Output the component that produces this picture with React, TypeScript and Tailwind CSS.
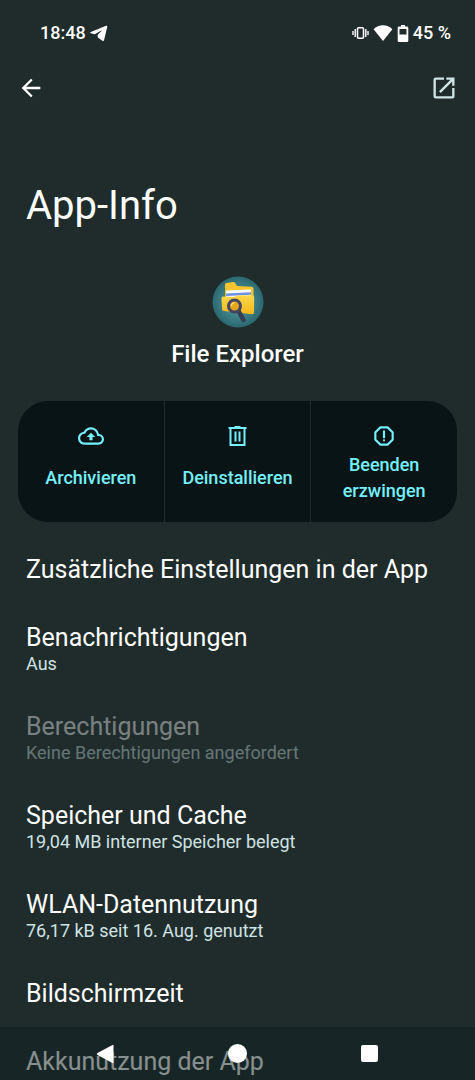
import type { ReactNode } from "react";
import {
  MdArrowBack,
  MdOpenInNew,
  MdOutlineBackup,
  MdOutlineReport,
} from "react-icons/md";

/* ===================== TYPES ===================== */
type Setting = {
  title: string;
  summary?: string;
  disabled?: boolean;
};

/* ===================== DATA ===================== */
const settings: Setting[] = [
  { title: "Zusätzliche Einstellungen in der App" },
  { title: "Benachrichtigungen", summary: "Aus" },
  {
    title: "Berechtigungen",
    summary: "Keine Berechtigungen angefordert",
    disabled: true,
  },
  {
    title: "Speicher und Cache",
    summary: "19,04 MB interner Speicher belegt",
  },
  {
    title: "WLAN-Datennutzung",
    summary: "76,17 kB seit 16. Aug. genutzt",
  },
  { title: "Bildschirmzeit" },
  {
    title: "Akkunutzung der App",
    summary: "0 % Nutzung seit dem letzten vollständigen Aufladen",
  },
];

/* ===================== PAGE ===================== */
export default function App() {
  return (
    <div className="flex h-screen flex-col bg-[#202b2c] font-[Roboto,sans-serif] text-white">
      <StatusBar />

      <header className="flex items-center justify-between px-[17px]">
        <button aria-label="Zurück">
          <MdArrowBack className="size-7" />
        </button>
        <button aria-label="In App öffnen" className="text-[#cfe5e6]">
          <MdOpenInNew className="size-7" />
        </button>
      </header>

      <main className="flex-1 overflow-y-auto pb-16 [scrollbar-width:none]">
        <h1 className="px-[26px] pt-[78px] text-[40px] leading-[52px]">App-Info</h1>

        <div className="flex flex-col items-center pt-11">
          <AppIcon />
          <h2 className="pt-2.5 text-2xl font-medium">File Explorer</h2>
        </div>

        <div className="mx-[18px] mt-[31px] grid min-h-[121px] grid-cols-3 gap-px overflow-hidden rounded-[30px]">
          <ActionButton label="Archivieren" icon={<MdOutlineBackup className="size-[26px]" />} />
          <ActionButton label="Deinstallieren" icon={<TrashIcon />} />
          <ActionButton
            label="Beenden erzwingen"
            icon={<MdOutlineReport className="size-[26px]" />}
          />
        </div>

        <ul className="pt-3.5">
          {settings.map((s) => (
            <SettingItem key={s.title} {...s} />
          ))}
        </ul>
      </main>

      <NavigationBar />
    </div>
  );
}

/* ================= STATUS BAR ================= */
function StatusBar() {
  return (
    <div className="flex items-center justify-between pt-[21px] pr-6 pb-[29px] pl-10 text-lg leading-6 font-medium">
      <div className="flex items-center gap-1">
        <span>18:48</span>
        <svg viewBox="0 0 18 18" className="size-[18px]" fill="currentColor">
          <path d="M16 1.800.8 8c-.8.4-.8.9 0 1.200l4 1.100 6.500-3.800c.5-.3.8 0 .4.300L8 10.500c-.8 1.200-.6 2.500.8 3.800l3.600 2.500c.8.5 1.500.2 1.700-.7L17.200 3c.2-1-.4-1.500-1.200-1.200Z" />
        </svg>
      </div>
      <div className="flex items-center gap-1">
        <svg viewBox="0 0 17 14" className="h-[14px] w-[17px]" fill="none" stroke="currentColor">
          <rect x="5.500" y="1.700" width="6" height="10.600" rx="1" strokeWidth="1.500" />
          <path d="M3.200 3v8M13.800 3v8M1 5v4M16 5v4" strokeWidth="1.400" />
        </svg>
        <svg viewBox="0 0 20 16" className="h-4 w-5" fill="currentColor">
          <path d="M10 16 .6 4.200C3.200 1.600 6.500.3 10 .3s6.800 1.300 9.400 3.900L10 16Z" />
        </svg>
        <svg viewBox="0 0 12 17" className="h-[17px] w-3" fill="currentColor" fillRule="evenodd">
          <path d="M4 0h4v1.600h2a1.300 1.300 0 0 1 1.300 1.300v12.800a1.300 1.300 0 0 1-1.300 1.300H2a1.300 1.300 0 0 1-1.300-1.300V2.900A1.300 1.300 0 0 1 2 1.600h2V0ZM2.500 4v5.500h7V4h-7Z" />
        </svg>
        <span>45 %</span>
      </div>
    </div>
  );
}

/* ================= APP ICON ================= */
function AppIcon() {
  return (
    <svg viewBox="0 0 52 52" className="size-[52px]">
      <defs>
        <radialGradient id="disc">
          <stop offset="0" stopColor="#5aa3a8" />
          <stop offset="1" stopColor="#2b6870" />
        </radialGradient>
        <linearGradient id="folder" x1="0" y1="0" x2="0" y2="1">
          <stop offset="0" stopColor="#ffd84a" />
          <stop offset="1" stopColor="#f3b81c" />
        </linearGradient>
      </defs>
      <circle cx="26" cy="26" r="25.500" fill="url(#disc)" />
      <path d="M13 8.500q0-1.300 1.500-1.500L21 6q1.500-.2 2.200 1L25 10l14.500.8q2 .2 2 1.700V30H13Z" fill="#f6c42f" />
      <path d="m14 14.500 25-1v14H14Z" fill="#f5f8ff" />
      <path d="m14 17.600 25-1.300v2.500l-25 1.300Z" fill="#6f92dc" />
      <path d="M9.500 22q0-1.500 1.500-1.500L22 21l3-1.500 15.500-.3q1.700 0 1.700 1.700L42 36.500q-.2 2-2 1.800L12 35q-1.800-.2-1.900-1.700Z" fill="url(#folder)" />
      <path d="m26.500 35 5 9" stroke="#393c57" strokeWidth="4.500" strokeLinecap="round" />
      <circle cx="22.500" cy="30" r="6" fill="#e7a51e" stroke="#454663" strokeWidth="3" />
      <path d="M19.500 30q0-3 3-3.500" fill="none" stroke="#ffdf83" strokeWidth="1.200" />
    </svg>
  );
}

/* ================= ACTION BUTTON ================= */
function ActionButton({ label, icon }: { label: string; icon: ReactNode }) {
  return (
    <button className="flex flex-col items-center bg-[#091416] px-4 pt-[22px] text-lg leading-[26px] font-medium text-[#74f0fb]">
      {icon}
      <span className="flex min-h-[58px] items-center">{label}</span>
    </button>
  );
}

function TrashIcon() {
  return (
    <svg viewBox="0 0 26 26" className="size-[26px]" fill="none" stroke="currentColor" strokeWidth="2">
      <path d="M4.500 5h18M10.500 4h6M6.500 5v17h14V5M11.500 8.500v10M15.500 8.500v10" />
    </svg>
  );
}

/* ================= SETTING ITEM ================= */
function SettingItem({ title, summary, disabled }: Setting) {
  return (
    <li className="min-h-[68px]">
      <button
        disabled={disabled}
        className="block w-full px-[26px] pt-[19px] pb-[18px] text-left disabled:opacity-40"
      >
        <span className="block text-[25px] leading-[30px]">{title}</span>
        {summary && (
          <span className="block text-lg leading-[22px] text-[#cfe3e3]">{summary}</span>
        )}
      </button>
    </li>
  );
}

/* ================= NAVIGATION BAR ================= */
function NavigationBar() {
  return (
    <nav className="fixed inset-x-0 bottom-0 grid h-[53px] grid-cols-3 items-center bg-[#0f1f20]/50 px-[39px]">
      <button aria-label="Zurück" className="flex justify-center">
        <svg viewBox="0 0 20 20" className="size-5" fill="currentColor">
          <path d="M18.500 1.500v17q0 1-1 .500L2.500 11q-1.500-1 0-2L17.500 1q1-.5 1 .500Z" />
        </svg>
      </button>
      <button aria-label="Startbildschirm" className="flex justify-center">
        <span className="size-[19px] rounded-full bg-white" />
      </button>
      <button aria-label="Letzte Apps" className="flex justify-center">
        <span className="size-[17px] rounded-xs bg-white" />
      </button>
    </nav>
  );
}
